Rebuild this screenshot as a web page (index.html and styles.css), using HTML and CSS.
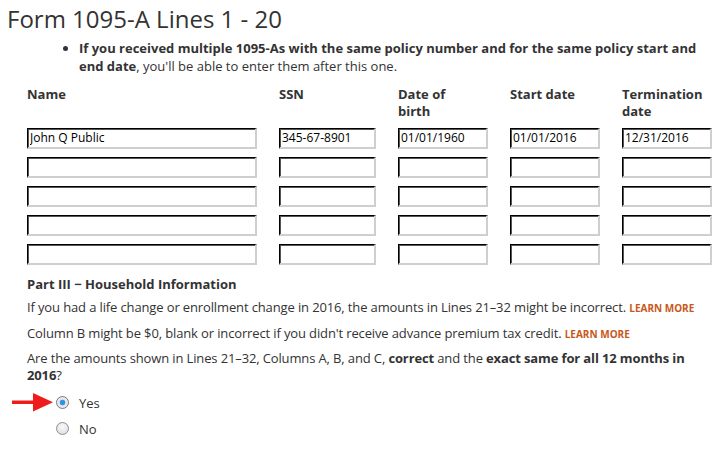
FILE: index.html
```html
<!DOCTYPE html>
<html lang="en">
<head>
  <meta charset="UTF-8">
  <title>Form 1095-A Lines 1 - 20</title>
  <link rel="stylesheet" href="styles.css">
</head>
<body>

  <h1 class="page-title">Form 1095-A Lines 1 - 20</h1>

  <ul class="notes">
    <li><strong>If you received multiple 1095-As with the same policy number and for the same policy start and end date</strong>, you'll be able to enter them after this one.</li>
  </ul>

  <div class="coverage">
    <div class="col-head">Name</div>
    <div class="col-head">SSN</div>
    <div class="col-head">Date of birth</div>
    <div class="col-head">Start date</div>
    <div class="col-head">Termination date</div>

    <input type="text" value="John Q Public">
    <input type="text" value="345-67-8901">
    <input type="text" value="01/01/1960">
    <input type="text" value="01/01/2016">
    <input type="text" value="12/31/2016">

    <input type="text"><input type="text"><input type="text"><input type="text"><input type="text">
    <input type="text"><input type="text"><input type="text"><input type="text"><input type="text">
    <input type="text"><input type="text"><input type="text"><input type="text"><input type="text">
    <input type="text"><input type="text"><input type="text"><input type="text"><input type="text">
  </div>

  <div class="household">
    <h3>Part III &minus; Household Information</h3>
    <p>If you had a life change or enrollment change in 2016, the amounts in Lines 21&ndash;32 might be incorrect. <a href="#" class="learn">Learn more</a></p>
    <p>Column B might be $0, blank or incorrect if you didn't receive advance premium tax credit. <a href="#" class="learn">Learn more</a></p>
    <p class="question">Are the amounts shown in Lines 21&ndash;32, Columns A, B, and C, <strong>correct</strong> and the <strong>exact same for all 12 months in 2016</strong>?</p>

    <div class="choices">
      <label class="choice">
        <svg class="pointer" width="41" height="19" viewBox="0 0 41 19">
          <rect x="0" y="7.5" width="23" height="3.5" fill="#ee1c1c"/>
          <polygon points="21,0 41,9.3 21,18.5" fill="#ee1c1c"/>
        </svg>
        <input type="radio" name="same" checked> Yes
      </label>
      <label class="choice"><input type="radio" name="same"> No</label>
    </div>
  </div>

</body>
</html>
```

FILE: styles.css
```css
body {
  margin: 0;
  font-family: 'Open Sans', sans-serif;
  font-size: 13px;
  color: #333;
  background: #fff;
}

.page-title {
  font-size: 24px;
  font-weight: normal;
  line-height: 30px;
  margin: 4px 0 0 7px;
  color: #333;
}

.notes {
  margin: 4.5px 0 0;
  padding-left: 79px;
  padding-right: 16px;
  line-height: 18.5px;
}

.notes strong {
  font-weight: bold;
}

.coverage {
  display: grid;
  grid-template-columns: 230px 97px 90px 90px 90px;
  column-gap: 22px;
  row-gap: 8px;
  margin: 10px 0 0 27px;
}

.col-head {
  font-weight: bold;
  line-height: 17px;
  height: 34px;
  max-width: 82px;
}

.coverage input {
  box-sizing: border-box;
  width: 100%;
  height: 21px;
  margin: 0;
  padding: 0 2px;
  font-family: 'Open Sans', sans-serif;
  font-size: 12px;
  color: #000;
  background: #fff;
  border-style: solid;
  border-width: 1px 2px 2px 1px;
  border-color: #000 #cfcfcf #cfcfcf #000;
  box-shadow: inset 1px 1px 0 #555;
  outline: none;
}

.household {
  margin: 11.5px 0 0 27px;
}

.household h3 {
  font-size: 13px;
  line-height: 17px;
  margin: 0 0 6px;
}

.household p {
  margin: 0 0 7.5px;
  line-height: 17px;
  letter-spacing: -0.13px;
  padding-right: 4px;
}

.household p.question {
  margin-bottom: 5.5px;
}

.learn {
  color: #c8581a;
  font-size: 10px;
  font-weight: bold;
  letter-spacing: 0;
  text-transform: uppercase;
  text-decoration: none;
}

.choice {
  position: relative;
  display: flex;
  align-items: center;
  height: 26px;
  padding-left: 29px;
}

.choice input {
  appearance: none;
  -webkit-appearance: none;
  box-sizing: border-box;
  width: 13px;
  height: 13px;
  margin: 0 10px 0 0;
  border: 1px solid #8f8f8f;
  border-radius: 50%;
  background: radial-gradient(circle at 50% 35%, #fafafa, #d9d9d9);
}

.choice input:checked {
  background: radial-gradient(circle, #2d8fe0 0, #3a95de 2.5px, #dfe9f2 3.2px, #e9e9e9 6px);
  border-color: #7a7a7a;
}

.pointer {
  position: absolute;
  left: -15px;
  top: 3px;
}
```
